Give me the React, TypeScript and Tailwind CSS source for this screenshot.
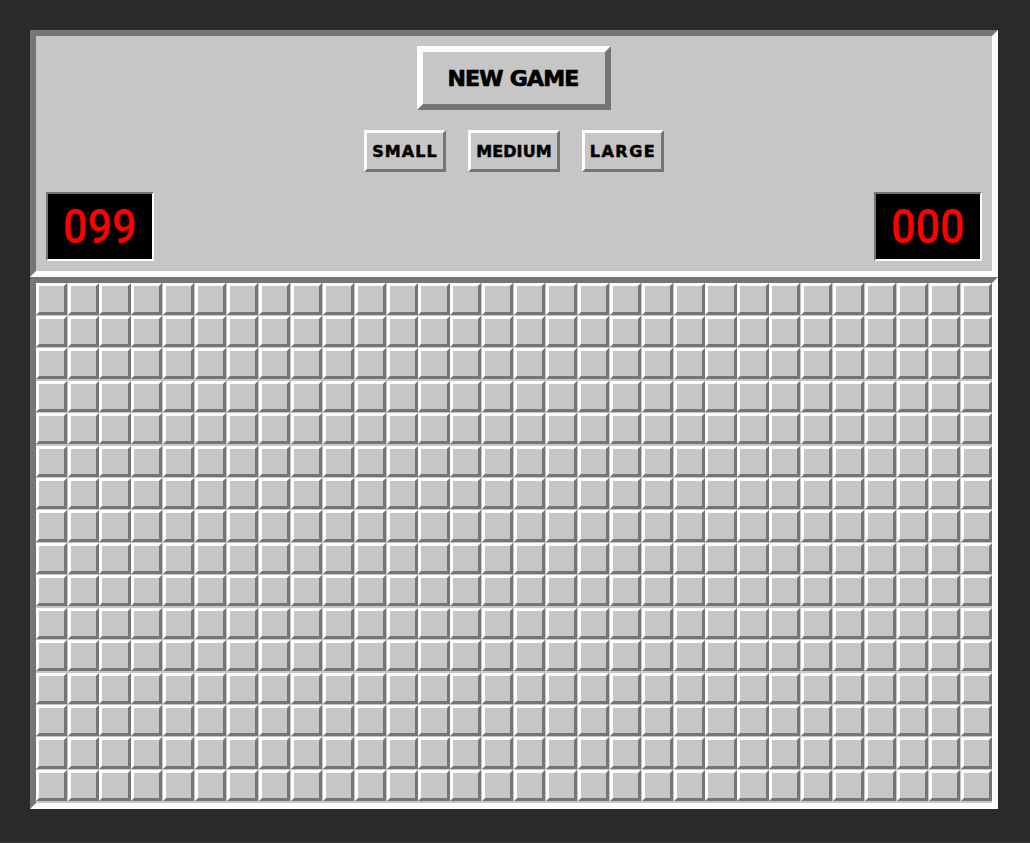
import { useState } from "react";

const COLUMNS = 30;
const ROWS = 16;

const sizes = [
  { label: "SMALL", width: "w-[82px]", text: "tracking-[1.1px]" },
  { label: "MEDIUM", width: "w-[92px]", text: "tracking-[0.1px]" },
  { label: "LARGE", width: "w-[82px]", text: "tracking-[1.5px]" },
];

const raised =
  "border-t-[#fdfdfd] border-l-[#fdfdfd] border-r-[#757575] border-b-[#757575]";
const sunken =
  "border-t-[#757575] border-l-[#757575] border-r-[#fdfdfd] border-b-[#fdfdfd]";

function Counter({ value }: { value: string }) {
  return (
    <div
      className={`flex h-[69px] w-[108px] items-center justify-center border-2 bg-black ${sunken}`}
    >
      <span className="origin-center scale-x-[0.88] font-['Roboto',sans-serif] text-[49px] leading-none font-medium text-[#ff0000]">
        {value}
      </span>
    </div>
  );
}

export default function App() {
  const [size, setSize] = useState("LARGE");

  return (
    <div className="h-[843px] w-[1030px] border-b border-[#383636] bg-[#2b2a28] pt-[30px] pl-[30px] font-['DejaVu_Sans',sans-serif] font-bold text-black">
      <main className="w-[968px] bg-[#c6c6c6]">
        <header className={`h-[247px] border-6 p-2.5 ${sunken}`}>
          <div className="flex justify-center">
            <button
              className={`flex h-16 w-[194px] items-center justify-center border-6 pt-0.5 pr-0.5 text-[22px] leading-none tracking-[-0.8px] [-webkit-text-stroke:0.7px_black] ${raised}`}
            >
              NEW GAME
            </button>
          </div>
          <nav className="mt-5 flex justify-center gap-[22px]">
            {sizes.map((s) => (
              <button
                key={s.label}
                aria-pressed={size === s.label}
                onClick={() => setSize(s.label)}
                className={`flex h-[42px] items-center justify-center border-3 pt-0.5 text-[16px] leading-none whitespace-nowrap [-webkit-text-stroke:0.5px_black] ${s.width} ${s.text} ${raised}`}
              >
                {s.label}
              </button>
            ))}
          </nav>
          <div className="mt-5 flex justify-between">
            <Counter value="099" />
            <Counter value="000" />
          </div>
        </header>
        <section className={`h-[532px] border-6 pt-[0.32px] ${sunken}`}>
          <div className="-ml-[0.4px] grid w-[956.2px] auto-rows-[31.2px] grid-cols-[repeat(30,minmax(0,1fr))] gap-x-[0.8px] gap-y-[1.25px]">
            {Array.from({ length: COLUMNS * ROWS }, (_, i) => (
              <button key={i} className={`border-3 ${raised}`} />
            ))}
          </div>
        </section>
      </main>
    </div>
  );
}
